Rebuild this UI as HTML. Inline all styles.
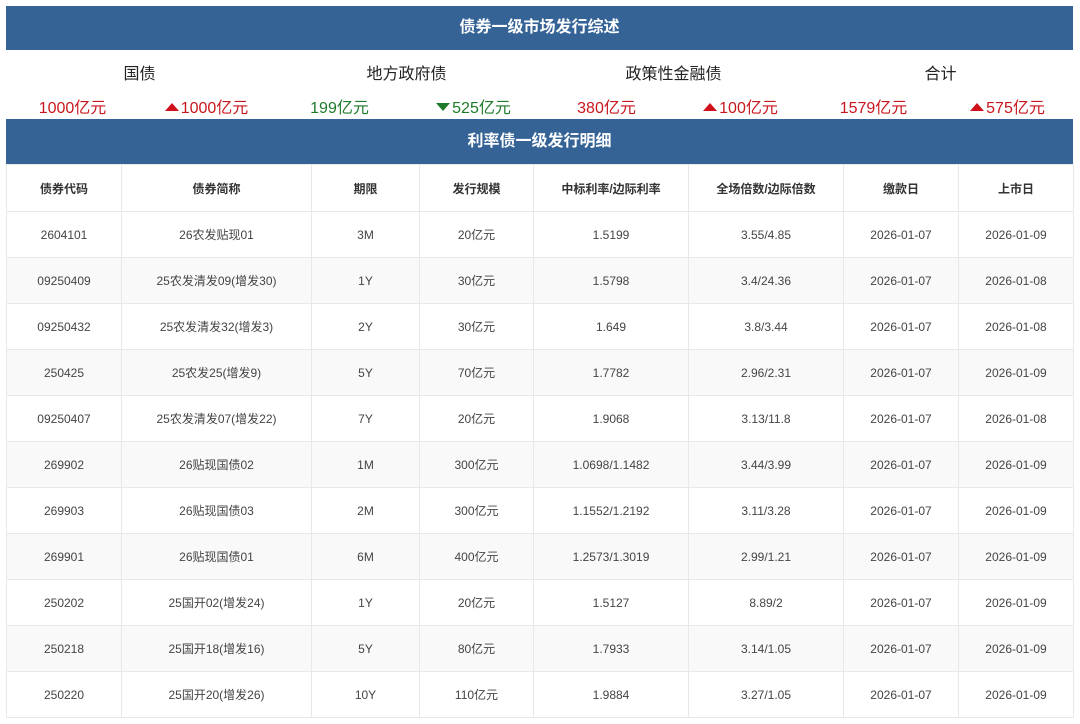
<!DOCTYPE html>
<html><head><meta charset="utf-8"><style>
body{margin:0;background:#fff;font-family:"Liberation Sans","Noto Sans CJK SC",sans-serif;width:1080px;height:724px;overflow:hidden}
.band{position:absolute;left:6px;width:1067px;background:#356396;color:#fff;font-weight:bold;font-size:16px;text-align:center}
.t{position:absolute;top:65px;width:267px;text-align:center;font-size:16px;color:#222;line-height:20px}
.v{position:absolute;top:99px;width:133px;text-align:center;font-size:16px;line-height:20px;height:20px}
.up,.dn{display:inline-block;width:0;height:0;border-left:7px solid transparent;border-right:7px solid transparent;vertical-align:middle;margin-right:2px;position:relative;top:-2px}
.up{border-bottom:8px solid #d0101a}
.dn{border-top:8px solid #1e7a2a}
.r{color:#c8161d}.g{color:#1e7a2a}
table{position:absolute;left:6px;top:164px;border-collapse:collapse;width:1067px;table-layout:fixed;font-size:12px;color:#444}
td{border:1px solid #e8e8e8;height:45px;text-align:center;padding:0}
tr.h td{font-weight:bold;height:46px;color:#333}
tr:nth-child(odd):not(.h) td{background:#f9f9f9}
</style></head><body>
<div class="band" style="top:6px;height:44px;line-height:44px">债券一级市场发行综述</div>
<div class="t" style="left:6px">国债</div>
<div class="t" style="left:273px">地方政府债</div>
<div class="t" style="left:540px">政策性金融债</div>
<div class="t" style="left:807px">合计</div>
<div class="v r" style="left:6px">1000亿元</div>
<div class="v r" style="left:140px"><span class="up"></span>1000亿元</div>
<div class="v g" style="left:273px">199亿元</div>
<div class="v g" style="left:407px"><span class="dn"></span>525亿元</div>
<div class="v r" style="left:540px">380亿元</div>
<div class="v r" style="left:674px"><span class="up"></span>100亿元</div>
<div class="v r" style="left:807px">1579亿元</div>
<div class="v r" style="left:941px"><span class="up"></span>575亿元</div>
<div class="band" style="top:119px;height:45px;line-height:45px">利率债一级发行明细</div>
<table>
<colgroup><col style="width:115px"><col style="width:190px"><col style="width:108px"><col style="width:114px"><col style="width:155px"><col style="width:155px"><col style="width:115px"><col style="width:115px"></colgroup>
<tr class="h"><td>债券代码</td><td>债券简称</td><td>期限</td><td>发行规模</td><td>中标利率/边际利率</td><td>全场倍数/边际倍数</td><td>缴款日</td><td>上市日</td></tr>
<tr><td>2604101</td><td>26农发贴现01</td><td>3M</td><td>20亿元</td><td>1.5199</td><td>3.55/4.85</td><td>2026-01-07</td><td>2026-01-09</td></tr>
<tr><td>09250409</td><td>25农发清发09(增发30)</td><td>1Y</td><td>30亿元</td><td>1.5798</td><td>3.4/24.36</td><td>2026-01-07</td><td>2026-01-08</td></tr>
<tr><td>09250432</td><td>25农发清发32(增发3)</td><td>2Y</td><td>30亿元</td><td>1.649</td><td>3.8/3.44</td><td>2026-01-07</td><td>2026-01-08</td></tr>
<tr><td>250425</td><td>25农发25(增发9)</td><td>5Y</td><td>70亿元</td><td>1.7782</td><td>2.96/2.31</td><td>2026-01-07</td><td>2026-01-09</td></tr>
<tr><td>09250407</td><td>25农发清发07(增发22)</td><td>7Y</td><td>20亿元</td><td>1.9068</td><td>3.13/11.8</td><td>2026-01-07</td><td>2026-01-08</td></tr>
<tr><td>269902</td><td>26贴现国债02</td><td>1M</td><td>300亿元</td><td>1.0698/1.1482</td><td>3.44/3.99</td><td>2026-01-07</td><td>2026-01-09</td></tr>
<tr><td>269903</td><td>26贴现国债03</td><td>2M</td><td>300亿元</td><td>1.1552/1.2192</td><td>3.11/3.28</td><td>2026-01-07</td><td>2026-01-09</td></tr>
<tr><td>269901</td><td>26贴现国债01</td><td>6M</td><td>400亿元</td><td>1.2573/1.3019</td><td>2.99/1.21</td><td>2026-01-07</td><td>2026-01-09</td></tr>
<tr><td>250202</td><td>25国开02(增发24)</td><td>1Y</td><td>20亿元</td><td>1.5127</td><td>8.89/2</td><td>2026-01-07</td><td>2026-01-09</td></tr>
<tr><td>250218</td><td>25国开18(增发16)</td><td>5Y</td><td>80亿元</td><td>1.7933</td><td>3.14/1.05</td><td>2026-01-07</td><td>2026-01-09</td></tr>
<tr><td>250220</td><td>25国开20(增发26)</td><td>10Y</td><td>110亿元</td><td>1.9884</td><td>3.27/1.05</td><td>2026-01-07</td><td>2026-01-09</td></tr>
</table>
</body></html>
